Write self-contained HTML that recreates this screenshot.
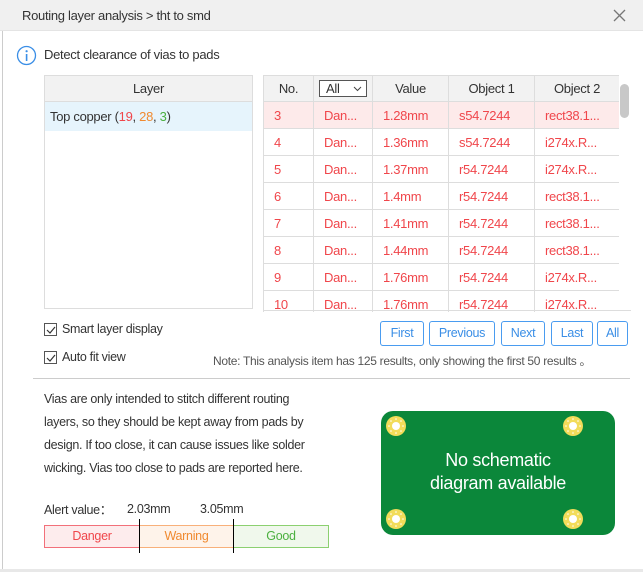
<!DOCTYPE html>
<html><head><style>
*{margin:0;padding:0;box-sizing:border-box}
body{width:643px;height:572px;background:#fff;font-family:"Liberation Sans",sans-serif;font-size:12.5px;color:#333;position:relative;overflow:hidden;letter-spacing:-0.3px}
.a{position:absolute}
.title{left:0;top:0;width:643px;height:31px;background:#f0f0f0;border-bottom:1px solid #e4e4e4}
table{border-collapse:collapse}
.rt td,.rt th{border:1px solid #ddd;height:27px;font-weight:normal;text-align:left;padding-left:10px;white-space:nowrap;overflow:hidden}
.rt th{background:#f2f2f2;text-align:center;padding:0;height:26px;color:#333;font-size:13px}
.rt td{color:#f0464b;font-size:13px}
.btn{top:321px;height:25px;border:1px solid #4a9cf0;border-radius:3px;color:#3a8ee6;text-align:center;line-height:23px;font-size:12.5px}
.cb{width:13px;height:13px;border:1px solid #555;left:44px}
</style></head><body>
<div class="a title"></div>
<div class="a" style="left:22px;top:8px;font-size:13px;color:#333">Routing layer analysis &gt; tht to smd</div>
<svg class="a" style="left:613px;top:9px" width="13" height="13"><path d="M1 1L12 12M12 1L1 12" stroke="#777" stroke-width="1.3"/></svg>
<div class="a" style="left:2px;top:31px;width:1px;height:541px;background:#ccc"></div>
<div class="a" style="left:0;top:569px;width:643px;height:3px;background:#e8e8e8"></div>
<svg class="a" style="left:16px;top:45px" width="21" height="21"><circle cx="10.5" cy="10.5" r="9" fill="none" stroke="#3a8ee6" stroke-width="1.3"/><rect x="9.8" y="9" width="1.6" height="7" fill="#3a8ee6"/><circle cx="10.6" cy="6.2" r="1.1" fill="#3a8ee6"/></svg>
<div class="a" style="left:44px;top:47px;font-size:13px">Detect clearance of vias to pads</div>

<div class="a" style="left:44px;top:75px;width:209px;height:234px;border:1px solid #ddd"></div>
<div class="a" style="left:45px;top:76px;width:207px;height:26px;background:#f2f2f2;border-bottom:1px solid #ddd;text-align:center;line-height:26px;font-size:13px">Layer</div>
<div class="a" style="left:45px;top:102px;width:207px;height:29px;background:#e6f4fc;line-height:29px;padding-left:5px;font-size:13px">Top copper (<span style="color:#f0464b">19</span>, <span style="color:#f08a30">28</span>, <span style="color:#4cb040">3</span>)</div>

<div class="a" style="left:263px;top:75px;width:356px;height:237px;overflow:hidden">
<table class="rt" style="width:356px;table-layout:fixed">
<colgroup><col style="width:50px"><col style="width:59px"><col style="width:76px"><col style="width:86px"><col style="width:85px"></colgroup>
<tr><th>No.</th><th><span style="display:inline-block;border:1px solid #555;height:17px;width:48px;line-height:15px;text-align:left;padding-left:6px;position:relative;background:#fff">All<svg style="position:absolute;right:4px;top:5px" width="9" height="6"><path d="M1 1L4.5 4.5L8 1" fill="none" stroke="#444"/></svg></span></th><th>Value</th><th>Object 1</th><th>Object 2</th></tr>
<tr style="background:#fdeaea"><td>3</td><td>Dan...</td><td>1.28mm</td><td>s54.7244</td><td>rect38.1...</td></tr>
<tr><td>4</td><td>Dan...</td><td>1.36mm</td><td>s54.7244</td><td>i274x.R...</td></tr>
<tr><td>5</td><td>Dan...</td><td>1.37mm</td><td>r54.7244</td><td>i274x.R...</td></tr>
<tr><td>6</td><td>Dan...</td><td>1.4mm</td><td>r54.7244</td><td>rect38.1...</td></tr>
<tr><td>7</td><td>Dan...</td><td>1.41mm</td><td>r54.7244</td><td>rect38.1...</td></tr>
<tr><td>8</td><td>Dan...</td><td>1.44mm</td><td>r54.7244</td><td>rect38.1...</td></tr>
<tr><td>9</td><td>Dan...</td><td>1.76mm</td><td>r54.7244</td><td>i274x.R...</td></tr>
<tr><td>10</td><td>Dan...</td><td>1.76mm</td><td>r54.7244</td><td>i274x.R...</td></tr>
</table></div>
<div class="a" style="left:263px;top:310px;width:368px;height:1px;background:#ddd"></div>
<div class="a" style="left:620px;top:84px;width:9px;height:34px;border-radius:5px;background:#c8c8c8"></div>

<div class="a btn" style="left:380px;width:44px">First</div>
<div class="a btn" style="left:429px;width:66px">Previous</div>
<div class="a btn" style="left:501px;width:44px">Next</div>
<div class="a btn" style="left:551px;width:42px">Last</div>
<div class="a btn" style="left:597px;width:31px">All</div>

<div class="a cb" style="top:323px"></div><svg class="a" style="left:46px;top:326px" width="10" height="8"><path d="M1 4L4 7L9 1" fill="none" stroke="#333" stroke-width="1.2"/></svg>
<div class="a" style="left:62px;top:322px">Smart layer display</div>
<div class="a cb" style="top:351px"></div><svg class="a" style="left:46px;top:354px" width="10" height="8"><path d="M1 4L4 7L9 1" fill="none" stroke="#333" stroke-width="1.2"/></svg>
<div class="a" style="left:62px;top:350px">Auto fit view</div>
<div class="a" style="left:213px;top:352px;font-size:12px;color:#555">Note: This analysis item has 125 results, only showing the first 50 results 。</div>
<div class="a" style="left:33px;top:378px;width:597px;height:1px;background:#ccc"></div>

<div class="a" style="left:44px;top:388px;width:320px;line-height:23px;font-size:12.5px;white-space:nowrap">Vias are only intended to stitch different routing<br>layers, so they should be kept away from pads by<br>design. If too close, it can cause issues like solder<br>wicking. Vias too close to pads are reported here.</div>
<div class="a" style="left:44px;top:499px">Alert value：</div>
<div class="a" style="left:127px;top:502px">2.03mm</div>
<div class="a" style="left:200px;top:502px">3.05mm</div>
<div class="a" style="left:44px;top:525px;width:96px;height:23px;background:#fdeced;border:1px solid #f2707a;color:#f0464b;text-align:center;line-height:21px">Danger</div>
<div class="a" style="left:139px;top:525px;width:95px;height:23px;background:#fef3ea;border:1px solid #f8b07a;color:#f08a30;text-align:center;line-height:21px">Warning</div>
<div class="a" style="left:233px;top:525px;width:96px;height:23px;background:#f0f8ec;border:1px solid #8cd070;color:#4cb040;text-align:center;line-height:21px">Good</div>
<div class="a" style="left:139px;top:519px;width:1px;height:34px;background:#000"></div>
<div class="a" style="left:233px;top:519px;width:1px;height:34px;background:#000"></div>

<div class="a" style="left:381px;top:411px;width:234px;height:124px;background:#0b873a;border-radius:12px"></div>
<svg class="a" style="left:381px;top:411px" width="234" height="124">
<defs><g id="p"><circle r="10" fill="#f2dc5a"/><circle r="4" fill="#fff"/>
<circle cx="7" cy="0" r="0.8" fill="#fff"/><circle cx="-7" cy="0" r="0.8" fill="#fff"/><circle cx="0" cy="7" r="0.8" fill="#fff"/><circle cx="0" cy="-7" r="0.8" fill="#fff"/>
<circle cx="5" cy="5" r="0.8" fill="#fff"/><circle cx="-5" cy="5" r="0.8" fill="#fff"/><circle cx="5" cy="-5" r="0.8" fill="#fff"/><circle cx="-5" cy="-5" r="0.8" fill="#fff"/></g></defs>
<use href="#p" x="15" y="15"/><use href="#p" x="192" y="15"/><use href="#p" x="15" y="108"/><use href="#p" x="192" y="108"/>
</svg>
<div class="a" style="left:381px;top:449px;width:234px;text-align:center;color:#fff;font-size:18px;line-height:23px">No schematic<br>diagram available</div>
</body></html>
